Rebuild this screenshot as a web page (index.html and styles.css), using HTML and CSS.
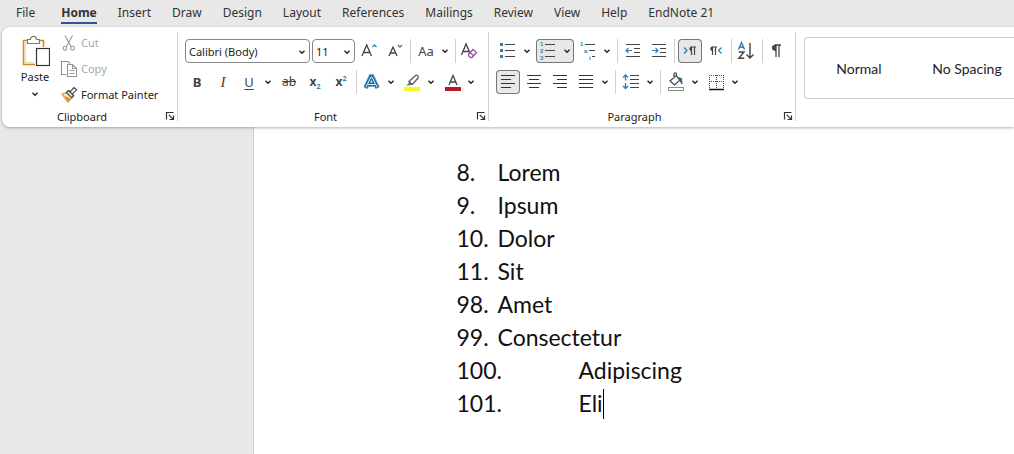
FILE: index.html
```html
<!DOCTYPE html>
<html lang="en">
<head>
    <meta charset="UTF-8">
    <meta name="viewport" content="width=device-width, initial-scale=1.0">
    <title>Document</title>
    <link rel="stylesheet" href="styles.css">
</head>
<body>

    <svg class="sprite" aria-hidden="true">
        <symbol id="chevron" viewBox="0 0 14 24">
            <path d="M4.5 10.8 L7 13.2 L9.5 10.8" fill="none" stroke="#222" stroke-width="1.4"/>
        </symbol>
        <symbol id="launcher" viewBox="0 0 10 10">
            <path d="M1.5 8.5 V1.5 H8.5 M3.8 3.8 L8.5 8.5 M8.5 4.5 V8.5 H4.5" fill="none" stroke="#333" stroke-width="1.2"/>
        </symbol>
    </svg>

    <nav class="tabs">
        <a class="tab tab-file" href="#">File</a>
        <a class="tab active" href="#">Home</a>
        <a class="tab" href="#">Insert</a>
        <a class="tab" href="#">Draw</a>
        <a class="tab" href="#">Design</a>
        <a class="tab" href="#">Layout</a>
        <a class="tab" href="#">References</a>
        <a class="tab" href="#">Mailings</a>
        <a class="tab" href="#">Review</a>
        <a class="tab" href="#">View</a>
        <a class="tab" href="#">Help</a>
        <a class="tab" href="#">EndNote 21</a>
    </nav>

    <div class="ribbon">
        <!-- Clipboard -->
        <section class="group clipboard">
            <div class="group-body">
                <button class="paste" type="button">
                    <svg width="30" height="34" viewBox="0 0 30 34">
                        <path d="M8 6.5 H3.5 V30.5 H15 M17 6.5 H23.5 V13" fill="none" stroke="#d48a2c" stroke-width="1.6"/>
                        <path d="M5.2 8 V28.8 H14" fill="none" stroke="#f7d9a8" stroke-width="1.6"/>
                        <path d="M7.5 9.5 V5.5 H10.5 C10.5 1.2 16.5 1.2 16.5 5.5 H19.5 V9.5 Z" fill="#fff" stroke="#7a7a7a" stroke-width="1.2"/>
                        <rect x="16.5" y="14.5" width="13" height="17" fill="#fff" stroke="#333" stroke-width="1.2"/>
                    </svg>
                    <span>Paste</span>
                    <svg width="14" height="16" viewBox="0 4 14 16"><use href="#chevron" width="14" height="24"/></svg>
                </button>
                <div class="clip-actions">
                    <button class="action" type="button" disabled>
                        <svg width="18" height="18" viewBox="0 0 18 18" fill="none" stroke="#9a9a9a" stroke-width="1.1">
                            <path d="M5 1.5 L11.3 13 M12.5 1.5 L6.2 13"/>
                            <circle cx="5" cy="14.2" r="1.9"/>
                            <circle cx="12.5" cy="14.2" r="1.9"/>
                        </svg>
                        Cut
                    </button>
                    <button class="action" type="button" disabled>
                        <svg width="18" height="18" viewBox="0 0 18 18" fill="none" stroke="#949494" stroke-width="1.1">
                            <path d="M6.5 14.5 H1.5 V1.5 H8 L10 3.5"/>
                            <path d="M7.5 4.5 H12.5 L16.5 8.5 V16.5 H7.5 Z M12.5 4.5 V8.5 H16.5 M9.5 10.5 H14.5 M9.5 13.5 H14.5"/>
                        </svg>
                        Copy
                    </button>
                    <button class="action" type="button">
                        <svg width="18" height="18" viewBox="0 0 18 18">
                            <path d="M2 8 L7 6.5 L12 11.5 L8 16 Z" fill="#fbe0bd" stroke="#df9239" stroke-width="1.2"/>
                            <path d="M4.5 10 L10.5 12.5 L8 15.5 Z" fill="#e58a27"/>
                            <path d="M6.5 6.5 L8.5 4.5 L10 6 L14 1.5 L16.5 3.8 L12.2 8.2 L13.7 9.7 L11.8 11.7 Z" fill="#fff" stroke="#444" stroke-width="1.2"/>
                            <path d="M8.5 4.5 L13.7 9.7" stroke="#444" stroke-width="1.2"/>
                        </svg>
                        Format Painter
                    </button>
                </div>
            </div>
            <div class="group-footer">
                <span class="group-name">Clipboard</span>
                <button class="launcher" type="button" aria-label="Clipboard settings"><svg width="10" height="10"><use href="#launcher"/></svg></button>
            </div>
        </section>

        <!-- Font -->
        <section class="group">
            <div class="group-rows">
                <div class="row">
                    <span class="combo combo-font">
                        <select aria-label="Font"><option>Calibri (Body)</option></select>
                        <svg width="14" height="24"><use href="#chevron"/></svg>
                    </span>
                    <span class="combo combo-size">
                        <select aria-label="Font size"><option>11</option></select>
                        <svg width="14" height="24"><use href="#chevron"/></svg>
                    </span>
                    <button class="tool" type="button" aria-label="Grow font">
                        <svg width="24" height="24" viewBox="0 0 24 24" fill="none" stroke-width="1.3">
                            <path d="M5 17 L9.7 6 L14.4 17 M6.5 13.5 H12.9" stroke="#444"/>
                            <path d="M15.5 8 L17.5 6 L19.5 8" stroke="#2f7fae"/>
                        </svg>
                    </button>
                    <button class="tool" type="button" aria-label="Shrink font">
                        <svg width="24" height="24" viewBox="0 0 24 24" fill="none" stroke-width="1.3">
                            <path d="M6 17 L10 8 L14 17 M7.3 14 H12.7" stroke="#444"/>
                            <path d="M15 6 L17 8 L19 6" stroke="#2f7fae"/>
                        </svg>
                    </button>
                    <span class="sep"></span>
                    <button class="tool split" type="button" aria-label="Change case">
                        <span class="glyph">Aa</span>
                        <svg width="14" height="24"><use href="#chevron"/></svg>
                    </button>
                    <span class="sep"></span>
                    <button class="tool" type="button" aria-label="Clear formatting">
                        <svg width="24" height="24" viewBox="0 0 24 24" fill="none" stroke-width="1.3">
                            <path d="M2.5 16 L7 5 L11 14 M4 12.5 H10" stroke="#444"/>
                            <path d="M9.5 15.5 L14 10.5 L17.5 13.5 L13 18.5 H11.5 L9.5 16.8 Z M11.2 13.7 L14.7 16.7" stroke="#9d4fb3"/>
                        </svg>
                    </button>
                </div>
                <div class="row">
                    <button class="tool glyph glyph-bold" type="button">B</button>
                    <button class="tool glyph glyph-italic" type="button">I</button>
                    <button class="tool split" type="button" aria-label="Underline">
                        <span class="glyph glyph-underline">U</span>
                        <svg width="14" height="24"><use href="#chevron"/></svg>
                    </button>
                    <button class="tool glyph glyph-strike" type="button">ab</button>
                    <button class="tool glyph glyph-script" type="button">x<sub>2</sub></button>
                    <button class="tool glyph glyph-script" type="button">x<sup>2</sup></button>
                    <span class="sep"></span>
                    <button class="tool split" type="button" aria-label="Text effects">
                        <svg width="24" height="24" viewBox="0 0 24 24">
                            <path d="M5.5 18 L10.8 6.5 H12.2 L17.5 18 M8 14.5 H15" fill="none" stroke="#8dc4e4" stroke-width="5"/>
                            <path d="M5.5 18 L11 6.5 H12 L17.5 18 M8 14.5 H15" fill="none" stroke="#1d6a97" stroke-width="3.6"/>
                            <path d="M5.8 17.5 L11 7 H12 L17.2 17.5 M8 14.5 H15" fill="none" stroke="#e5f3fb" stroke-width="1"/>
                        </svg>
                        <svg width="14" height="24"><use href="#chevron"/></svg>
                    </button>
                    <button class="tool split" type="button" aria-label="Highlight">
                        <svg width="24" height="24" viewBox="0 0 24 24">
                            <rect x="4" y="17" width="16" height="4" fill="#f6f81f"/>
                            <path d="M9 11.5 L15.5 5.5 C17 4.3 19.3 6.3 18 8 L12.5 14.5 Z" fill="#fff" stroke="#555" stroke-width="1.2"/>
                            <path d="M9 11 L13 14.5 L10.5 15 L6 15.8 L8.5 13.5 Z" fill="#666"/>
                        </svg>
                        <svg width="14" height="24"><use href="#chevron"/></svg>
                    </button>
                    <button class="tool split" type="button" aria-label="Font color">
                        <svg width="24" height="24" viewBox="0 0 24 24">
                            <rect x="5" y="17" width="16" height="4" fill="#bb1a1f"/>
                            <path d="M9 15 L13 5.5 L17 15 M10.3 12 H15.7" fill="none" stroke="#444" stroke-width="1.3"/>
                        </svg>
                        <svg width="14" height="24"><use href="#chevron"/></svg>
                    </button>
                </div>
            </div>
            <div class="group-footer">
                <span class="group-name">Font</span>
                <button class="launcher" type="button" aria-label="Font settings"><svg width="10" height="10"><use href="#launcher"/></svg></button>
            </div>
        </section>

        <!-- Paragraph -->
        <section class="group">
            <div class="group-rows">
                <div class="row">
                    <button class="tool split" type="button" aria-label="Bullets">
                        <svg width="24" height="24" viewBox="0 0 24 24">
                            <path d="M4 4 h3 v3 h-3 Z M4 10 h3 v3 h-3 Z M4 16 h3 v3 h-3 Z" fill="#2f7fae"/>
                            <path d="M9 5.5 H19 M9 11.5 H19 M9 17.5 H19" stroke="#444"/>
                        </svg>
                        <svg width="14" height="24"><use href="#chevron"/></svg>
                    </button>
                    <button class="tool split pressed" type="button" aria-label="Numbering">
                        <svg width="24" height="24" viewBox="0 0 24 24">
                            <g class="icon-digits"><text x="4" y="7">1</text><text x="4" y="14">2</text><text x="4" y="21">3</text></g>
                            <path d="M9 5.5 H19 M9 11.5 H19 M9 17.5 H19" stroke="#444"/>
                        </svg>
                        <svg width="14" height="24"><use href="#chevron"/></svg>
                    </button>
                    <button class="tool split" type="button" aria-label="Multilevel list">
                        <svg width="24" height="24" viewBox="0 0 24 24">
                            <g class="icon-digits"><text x="4" y="7">1</text><text x="8" y="14">a</text><text x="13" y="21">i</text></g>
                            <path d="M9 5.5 H19 M13 11.5 H19 M16 17.5 H19" stroke="#444"/>
                        </svg>
                        <svg width="14" height="24"><use href="#chevron"/></svg>
                    </button>
                    <span class="sep"></span>
                    <button class="tool" type="button" aria-label="Decrease indent">
                        <svg width="24" height="24" viewBox="0 0 24 24" fill="none">
                            <path d="M5 5.5 H19 M13 9.5 H19 M13 13.5 H19 M5 17.5 H19" stroke="#444"/>
                            <path d="M5 11.5 H11 M7.5 9 L5 11.5 L7.5 14" stroke="#2f7fae" stroke-width="1.2"/>
                        </svg>
                    </button>
                    <button class="tool" type="button" aria-label="Increase indent">
                        <svg width="24" height="24" viewBox="0 0 24 24" fill="none">
                            <path d="M5 5.5 H19 M13 9.5 H19 M13 13.5 H19 M5 17.5 H19" stroke="#444"/>
                            <path d="M5 11.5 H11 M8.5 9 L11 11.5 L8.5 14" stroke="#2f7fae" stroke-width="1.2"/>
                        </svg>
                    </button>
                    <span class="sep"></span>
                    <button class="tool pressed" type="button" aria-label="Left to right">
                        <svg width="24" height="24" viewBox="0 0 24 24">
                            <path d="M6 8.5 L9 11.5 L6 14.5" fill="none" stroke="#2f7fae" stroke-width="1.3"/>
                            <path d="M13.5 12 C10.5 12 10.5 7.5 13.5 7.5 Z" fill="#444"/>
                            <path d="M13.5 16 V7.5 M16.5 16 V7.5 M13 8 H18" stroke="#444" stroke-width="1.2"/>
                        </svg>
                    </button>
                    <button class="tool" type="button" aria-label="Right to left">
                        <svg width="24" height="24" viewBox="0 0 24 24">
                            <path d="M17.5 8.5 L14.5 11.5 L17.5 14.5" fill="none" stroke="#2f7fae" stroke-width="1.3"/>
                            <path d="M8.5 12 C5.5 12 5.5 7.5 8.5 7.5 Z" fill="#444"/>
                            <path d="M8.5 16 V7.5 M11.5 16 V7.5 M8 8 H13" stroke="#444" stroke-width="1.2"/>
                        </svg>
                    </button>
                    <span class="sep"></span>
                    <button class="tool" type="button" aria-label="Sort">
                        <svg width="24" height="24" viewBox="0 0 24 24" fill="none" stroke-width="1.4">
                            <path d="M3.5 10.5 L6.5 3.5 L9.5 10.5 M4.5 8.3 H8.5" stroke="#2f7fae"/>
                            <path d="M3.8 13 H9 L3.8 19.3 H9.3" stroke="#444"/>
                            <path d="M15 4 V19 M11.5 15.5 L15 19 L18.5 15.5" stroke="#444"/>
                        </svg>
                    </button>
                    <span class="sep"></span>
                    <button class="tool" type="button" aria-label="Show marks">
                        <svg width="24" height="24" viewBox="0 0 24 24">
                            <path d="M10 12 C4.5 12 4.5 5.5 10 5.5 Z" fill="#444"/>
                            <path d="M10 18 V5.5 M13 18 V5.5 M9 6 H15" stroke="#444" stroke-width="1.3"/>
                        </svg>
                    </button>
                </div>
                <div class="row">
                    <button class="tool pressed" type="button" aria-label="Align left">
                        <svg width="24" height="24" viewBox="0 0 24 24"><path d="M5 5.5 H19 M5 9.5 H15 M5 13.5 H19 M5 17.5 H15" stroke="#333"/></svg>
                    </button>
                    <button class="tool" type="button" aria-label="Center">
                        <svg width="24" height="24" viewBox="0 0 24 24"><path d="M5 5.5 H19 M7 9.5 H17 M5 13.5 H19 M7 17.5 H17" stroke="#333"/></svg>
                    </button>
                    <button class="tool" type="button" aria-label="Align right">
                        <svg width="24" height="24" viewBox="0 0 24 24"><path d="M5 5.5 H19 M9 9.5 H19 M5 13.5 H19 M9 17.5 H19" stroke="#333"/></svg>
                    </button>
                    <button class="tool split" type="button" aria-label="Justify">
                        <svg width="24" height="24" viewBox="0 0 24 24"><path d="M5 5.5 H19 M5 9.5 H19 M5 13.5 H19 M5 17.5 H19" stroke="#333"/></svg>
                        <svg width="14" height="24"><use href="#chevron"/></svg>
                    </button>
                    <span class="sep"></span>
                    <button class="tool split" type="button" aria-label="Line spacing">
                        <svg width="24" height="24" viewBox="0 0 24 24" fill="none">
                            <path d="M6.5 5 V10.5 M4 7.5 L6.5 5 L9 7.5 M6.5 13 V18.5 M4 16 L6.5 18.5 L9 16" stroke="#2f7fae" stroke-width="1.3"/>
                            <path d="M11 5.5 H20 M11 9.5 H20 M11 13.5 H20 M11 17.5 H20" stroke="#444"/>
                        </svg>
                        <svg width="14" height="24"><use href="#chevron"/></svg>
                    </button>
                    <span class="sep"></span>
                    <button class="tool split" type="button" aria-label="Shading">
                        <svg width="24" height="24" viewBox="0 0 24 24" fill="none">
                            <path d="M6 11 L12 5.5 L16 10 L10.5 15 Z M10 8.5 V4 C10 2.5 12.5 2.5 12.5 4 V6.5" stroke="#444" stroke-width="1.2"/>
                            <path d="M14 7.5 L17.5 8.5 L18 14 Z" fill="#28658c" stroke="#28658c"/>
                            <rect x="4.5" y="17.5" width="15" height="3" fill="#fff" stroke="#8a8f86"/>
                        </svg>
                        <svg width="14" height="24"><use href="#chevron"/></svg>
                    </button>
                    <button class="tool split" type="button" aria-label="Borders">
                        <svg width="24" height="24" viewBox="0 0 24 24" fill="none">
                            <path d="M5 5.5 H20 M5.5 5 V18 M19.5 5 V18 M12.5 5 V18 M5 11.5 H20" stroke="#444" stroke-dasharray="1 1"/>
                            <path d="M5 19.5 H20" stroke="#111" stroke-width="1.5"/>
                        </svg>
                        <svg width="14" height="24"><use href="#chevron"/></svg>
                    </button>
                </div>
            </div>
            <div class="group-footer">
                <span class="group-name">Paragraph</span>
                <button class="launcher" type="button" aria-label="Paragraph settings"><svg width="10" height="10"><use href="#launcher"/></svg></button>
            </div>
        </section>

        <!-- Styles gallery, runs off the right edge -->
        <section class="styles">
            <div class="gallery">
                <button class="style-item" type="button">Normal</button>
                <button class="style-item" type="button">No Spacing</button>
            </div>
        </section>
    </div>

    <main class="workspace">
        <div class="margin-pane"></div>
        <article class="page">
            <ol class="list">
                <li><span class="num">8.</span>Lorem</li>
                <li><span class="num">9.</span>Ipsum</li>
                <li><span class="num">10.</span>Dolor</li>
                <li><span class="num">11.</span>Sit</li>
                <li><span class="num">98.</span>Amet</li>
                <li><span class="num">99.</span>Consectetur</li>
                <li class="wide"><span class="num">100.</span>Adipiscing</li>
                <li class="wide"><span class="num">101.</span>Eli<span class="caret"></span></li>
            </ol>
        </article>
    </main>

</body>
</html>
```
FILE: styles.css
```css
* {
    box-sizing: border-box;
}

body {
    margin: 0;
    min-height: 100vh;
    display: flex;
    flex-direction: column;
    background: #e8e8e8;
    color: #222;
    font-family: "Noto Sans", sans-serif;
    font-size: 12px;
    overflow-x: hidden;
}

button, select {
    font: inherit;
    color: inherit;
    background: none;
    border: 0;
    padding: 0;
    margin: 0;
}

svg {
    display: block;
    flex: none;
}

.sprite {
    position: absolute;
    width: 0;
    height: 0;
}

/* Tabs */
.tabs {
    display: flex;
    gap: 21px;
    height: 27px;
    padding-left: 16px;
    white-space: nowrap;
}

.tab {
    color: #333;
    text-decoration: none;
    line-height: 17px;
    padding-top: 4px;
    height: 24px;
}

.tab-file {
    margin-right: 5px;
}

.tab.active {
    font-weight: bold;
    border-bottom: 2px solid #2b579a;
}

/* Ribbon */
.ribbon {
    display: flex;
    height: 100px;
    margin-left: 2px;
    background: #fff;
    border-radius: 8px 0 0 8px;
    box-shadow: 0 1px 3px rgba(0, 0, 0, 0.3);
    position: relative;
    z-index: 1;
}

.group {
    display: flex;
    flex-direction: column;
    flex: none;
    justify-content: space-between;
    padding: 12px 6px 0 7px;
    position: relative;
}

.group::after {
    content: "";
    position: absolute;
    right: 0;
    top: 5px;
    bottom: 6px;
    border-right: 1px solid #d0d0d0;
}

.group-rows {
    display: flex;
    flex-direction: column;
    gap: 7px;
}

.row {
    display: flex;
    align-items: center;
    gap: 2px;
}

.group-footer {
    display: flex;
    align-items: center;
    height: 18px;
    margin-bottom: 2px;
    margin-right: -3px;
    font-size: 11px;
}

.group-name {
    flex: 1;
    padding-right: 10px;
    text-align: center;
}

.sep {
    width: 1px;
    height: 24px;
    margin: 0 1px;
    background: #d0d0d0;
}

/* Clipboard group */
.clipboard {
    width: 176px;
    padding-top: 7px;
}

.group-body {
    display: flex;
    gap: 9px;
    padding-left: 10px;
}

.paste {
    display: flex;
    flex-direction: column;
    align-items: center;
    width: 32px;
    line-height: 18px;
    font-size: 11px;
}

.clip-actions {
    display: flex;
    flex-direction: column;
    gap: 8px;
}

.action {
    display: flex;
    align-items: center;
    gap: 3px;
    line-height: 18px;
    font-size: 11px;
    white-space: nowrap;
}

.action:disabled {
    color: #a8a8a8;
}

/* Buttons in the tool rows */
.tool {
    width: 24px;
    height: 24px;
    border-radius: 4px;
    text-align: center;
}

.split {
    display: flex;
    width: 38px;
}

.pressed {
    background: #e8e8e8;
    box-shadow: inset 0 0 0 1px #777;
}

.glyph {
    width: 24px;
    line-height: 24px;
    color: #444;
    font-size: 13px;
}

.glyph-bold {
    font-weight: bold;
}

.glyph-italic {
    font-family: "Liberation Serif", serif;
    font-style: italic;
    font-size: 15px;
}

.glyph-underline {
    text-decoration: underline;
    text-underline-offset: 2px;
}

.glyph-strike {
    text-decoration: line-through;
    font-size: 12px;
}

.glyph-script {
    font-weight: bold;
    font-size: 12px;
}

.glyph-script sub, .glyph-script sup {
    color: #2f7fae;
    font-size: 7px;
    line-height: 0;
}

.icon-digits {
    fill: #2f7fae;
    font-family: "Liberation Sans", sans-serif;
    font-size: 6px;
    font-weight: bold;
}

.combo {
    display: grid;
    align-items: center;
    justify-items: end;
    height: 24px;
    border: 1px solid #888;
    border-radius: 4px;
}

.combo > * {
    grid-area: 1 / 1;
}

.combo svg {
    pointer-events: none;
}

.combo select {
    appearance: none;
    width: 100%;
    height: 22px;
    padding: 0 0 2px 3px;
    font-size: 11px;
}

.combo-font {
    width: 125px;
}

.combo-size {
    width: 43px;
}

/* Launcher */
.launcher {
    width: 10px;
    height: 10px;
}

/* Styles gallery */
.styles {
    flex: 1;
    min-width: 0;
    padding: 10px 0 0 8px;
}

.gallery {
    display: flex;
    height: 62px;
    border: 1px solid #ccc;
    border-right: 0;
    border-radius: 4px 0 0 4px;
    overflow: hidden;
}

.style-item {
    flex: 0 0 108px;
    font-family: Lato, sans-serif;
    font-size: 14px;
}

/* Document */
.workspace {
    display: flex;
    flex: 1;
}

.margin-pane {
    flex: 0 0 25%;
    border-right: 1px solid #d0d0d0;
}

.page {
    flex: 1;
    background: #fff;
    padding: 29px 0 0 203px;
}

.list {
    list-style: none;
    margin: 0;
    padding: 0;
    color: #111;
    font-family: Lato, sans-serif;
    font-size: 23px;
    line-height: 33px;
}

.list li {
    display: flex;
    align-items: center;
}

.num {
    width: 41px;
}

.wide .num {
    width: 122px;
}

.caret {
    width: 1px;
    height: 30px;
    background: #000;
}
```
